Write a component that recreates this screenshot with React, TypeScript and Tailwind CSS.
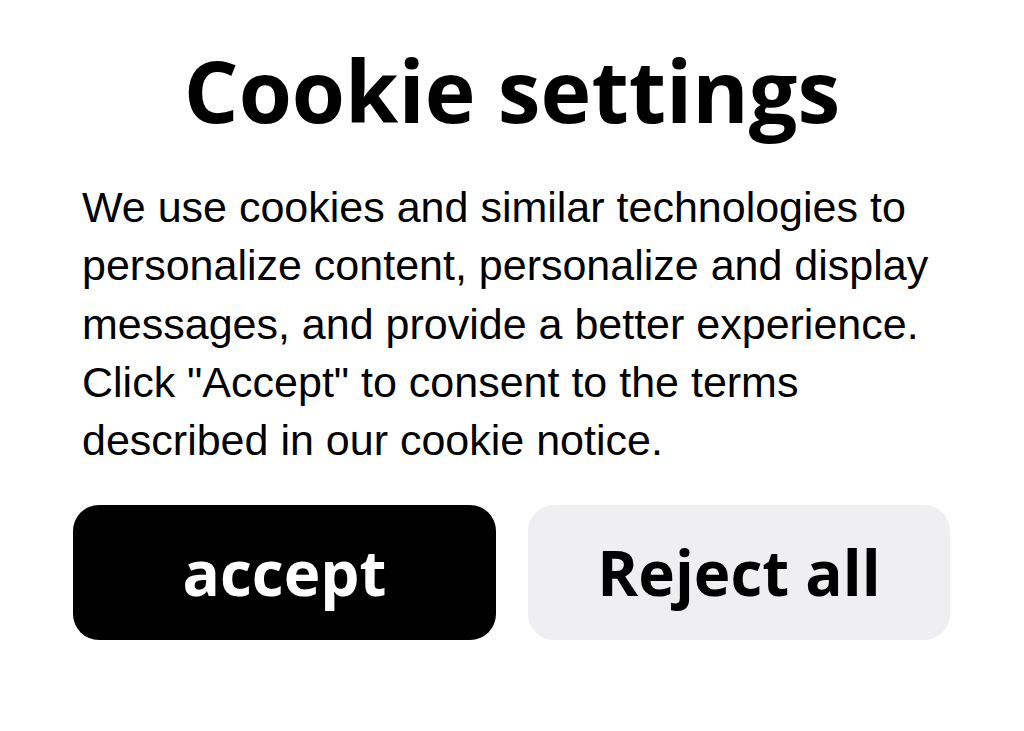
export default function App() {
  return (
    <div className="w-[1024px] h-[731px] bg-white flex flex-col">
      <h1 className="mt-[37px] text-center text-[86px] leading-[106px] font-bold text-black font-['Open_Sans',sans-serif]">
        Cookie settings
      </h1>
      <p className="mt-[35px] pl-[82px] pr-[80px] text-[43px] leading-[58.3px] text-black font-['Liberation_Sans',Arial,sans-serif]">
        We use cookies and similar technologies to personalize content, personalize and display messages, and provide a better experience. Click "Accept" to consent to the terms described in our cookie notice.
      </p>
      <div className="mt-[36px] pl-[73px] flex gap-[32px]">
        <button className="w-[423px] h-[135px] rounded-[26px] bg-black text-white text-[62px] font-bold font-['Open_Sans',sans-serif]">
          accept
        </button>
        <button className="w-[422px] h-[135px] rounded-[26px] bg-[#efeff1] text-black text-[62px] font-bold font-['Open_Sans',sans-serif]">
          Reject all
        </button>
      </div>
    </div>
  );
}
